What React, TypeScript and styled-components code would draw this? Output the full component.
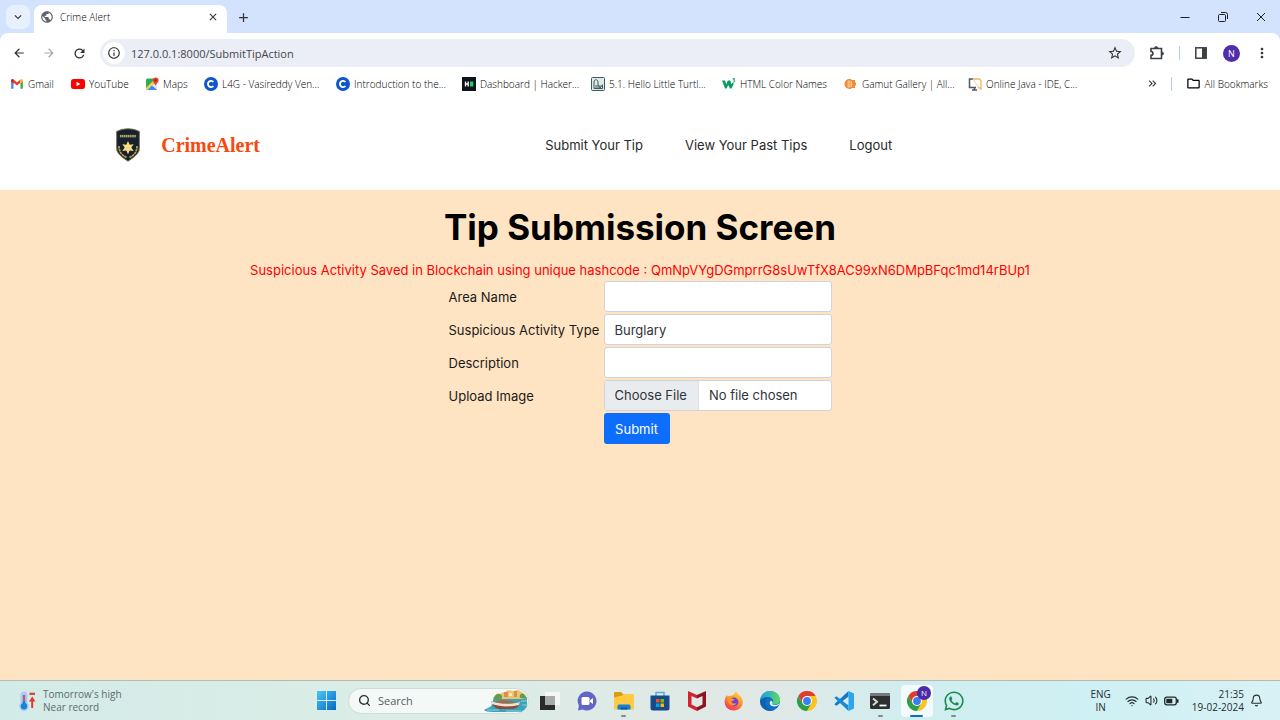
import React from "react";
import styled, { createGlobalStyle } from "styled-components";
import {
  MdArrowBack,
  MdArrowForward,
  MdRefresh,
  MdInfoOutline,
  MdStarBorder,
  MdMoreVert,
  MdOutlineFolder,
  MdKeyboardDoubleArrowRight,
  MdPublic,
  MdClose,
  MdAdd,
  MdKeyboardArrowDown,
} from "react-icons/md";
import { FaWhatsapp } from "react-icons/fa";
import { Bell, Search, Volume2, Wifi } from "lucide-react";

const uiFont = `"Open Sans", "Noto Sans", sans-serif`;

const GlobalStyle = createGlobalStyle`
  * { box-sizing: border-box; }
  body { margin: 0; font-family: Inter, sans-serif; }
  button, input, select { font: inherit; color: inherit; }
  svg { display: block; flex: none; }
`;

const Screen = styled.div`
  display: flex;
  flex-direction: column;
  min-height: 100vh;
`;

/* ---------- browser window ---------- */

const Browser = styled.header`
  background: #d3e2fd;
  font-family: ${uiFont};
  font-weight: 300;
  color: #303236;
`;

const TabStrip = styled.div`
  display: flex;
  align-items: flex-end;
  height: 33px;
  padding-left: 6px;
`;

const IconButton = styled.button<{ $size?: number; $color?: string }>`
  display: flex;
  align-items: center;
  justify-content: center;
  flex: none;
  width: ${(p) => p.$size ?? 24}px;
  height: ${(p) => p.$size ?? 24}px;
  padding: 0;
  border: 0;
  border-radius: 8px;
  background: none;
  color: ${(p) => p.$color ?? "#303236"};
`;

const TabSearch = styled(IconButton)`
  background: #e8f0fe;
  margin: 0 4px 4px 0;
`;

const Tab = styled.div`
  display: flex;
  align-items: center;
  gap: 6px;
  width: 193px;
  height: 28px;
  padding: 0 6px 4px 6px;
  border-radius: 8px 8px 0 0;
  background: #fff;
  font-size: 10px;
  color: #000;
`;

const TabTitle = styled.span`
  flex: 1;
`;

const NewTab = styled(IconButton)`
  margin: 0 0 4px 4px;
`;

const WindowButtons = styled.div`
  display: flex;
  align-self: center;
  margin-left: auto;
`;

const WindowButton = styled(IconButton)`
  width: 38px;
`;

const Toolbar = styled.div`
  display: flex;
  align-items: center;
  height: 40px;
  padding: 0 6px 0 4px;
  border-radius: 8px 8px 0 0;
  background: #fff;
`;

const NavButton = styled(IconButton)`
  width: 30px;
`;

const AddressBar = styled.form`
  display: flex;
  align-items: center;
  flex: 1;
  height: 28px;
  margin: 0 10px 0 6px;
  padding: 0 8px 0 3px;
  border-radius: 14px;
  background: #ebedf7;
`;

const SiteInfo = styled(IconButton)`
  border-radius: 50%;
  background: #fff;
`;

const AddressInput = styled.input`
  flex: 1;
  min-width: 0;
  padding: 0 6px;
  border: 0;
  outline: 0;
  background: none;
  font-size: 11px;
  font-weight: 400;
  color: #46484c;
`;

const Divider = styled.span<{ $space: string }>`
  width: 1px;
  height: 14px;
  margin: ${(p) => p.$space};
  background: #b4caf5;
`;

const Profile = styled.button`
  width: 17px;
  height: 17px;
  margin: 0 10px 0 10px;
  padding: 0;
  border: 0;
  border-radius: 50%;
  background: #512da8;
  color: #fff;
  font-size: 9px;
  font-weight: 400;
`;

const Bookmarks = styled.nav`
  display: flex;
  align-items: center;
  height: 27px;
  padding: 0 12px 6px 10px;
  background: #fff;
  font-size: 10px;
`;

const BookmarkList = styled.div`
  display: grid;
  grid-template-columns: 61px 74px 59px 132px 126px 129px 131px 122px 124px auto;
  flex: 1;
`;

const Bookmark = styled.a`
  display: flex;
  align-items: center;
  gap: 4px;
  color: #000;
  text-decoration: none;
  white-space: nowrap;
`;

/* ---------- site ---------- */

const SiteHeader = styled.div`
  display: flex;
  align-items: center;
  height: 90px;
  padding: 0 9%;
  background: #fff;
`;

const Brand = styled.a`
  display: flex;
  align-items: center;
  gap: 20px;
  flex: 0 0 430px;
  font-family: "Liberation Serif", serif;
  font-size: 20px;
  font-weight: 700;
  color: #f9480e;
  text-decoration: none;
`;

const SiteNav = styled.nav`
  display: flex;
  gap: 42px;
`;

const SiteLink = styled.a`
  font-size: 13px;
  line-height: 20px;
  color: #2a2a2a;
  text-decoration: none;
`;

const Main = styled.main`
  display: flex;
  flex-direction: column;
  align-items: center;
  flex: 1;
  padding-top: 14px;
  background: #ffe4c4;
  font-size: 13px;
  color: #1c1a17;
`;

const Title = styled.h1`
  margin: 0;
  font-size: 35px;
  font-weight: 700;
  line-height: 46px;
  color: #000;
`;

const Notice = styled.p`
  margin: 10px 0 0;
  line-height: 20px;
  color: #f00;
`;

const TipForm = styled.form`
  display: grid;
  grid-template-columns: 153px 228px;
  grid-auto-rows: 31px;
  gap: 2px;
  align-items: center;
  margin-top: 1px;
`;

const Label = styled.label`
  white-space: nowrap;
`;

const Field = styled.input`
  width: 100%;
  height: 31px;
  padding: 0 10px;
  border: 1px solid #ced4da;
  border-radius: 3px;
  background: #fff;
  color: #2f3438;
`;

const FileField = styled(Field)`
  line-height: 29px;
  overflow: hidden;

  &::file-selector-button {
    height: 29px;
    margin: 0 10px 0 -10px;
    padding: 0 11px 0 10px;
    border: 0;
    border-right: 1px solid #dde1e5;
    background: #e9ecef;
    font: inherit;
    color: inherit;
  }
`;

const Select = styled(Field).attrs({ as: "select" })`
  appearance: none;
`;

const SubmitButton = styled.button`
  grid-column: 2;
  justify-self: start;
  width: 66px;
  height: 31px;
  padding: 0;
  border: 0;
  border-radius: 3px;
  background: #0d6efd;
  color: #fff;
`;

/* ---------- taskbar ---------- */

const Taskbar = styled.footer`
  display: grid;
  grid-template-columns: 1fr auto 1fr;
  align-items: center;
  height: 40px;
  padding: 0 17px 0 18px;
  border-top: 1px solid #b5bcb4;
  background: linear-gradient(90deg, #d3ebe8, #dcede6 32%, #e0e8e6 60%, #d0eef0 72%, #cff0f4 85%, #d8f1f5);
  font-family: ${uiFont};
  font-size: 10px;
  line-height: 13px;
  color: #262d2f;
`;

const Weather = styled.div`
  display: flex;
  align-items: center;
  gap: 7px;
  color: #5d6b6c;
`;

const Dock = styled.div`
  display: flex;
  align-items: center;
`;

const StartButton = styled.button`
  display: flex;
  padding: 8px;
  border: 0;
  margin-right: 4px;
  background: none;
`;

const SearchBox = styled.label`
  display: flex;
  align-items: center;
  width: 181px;
  height: 26px;
  padding-left: 9px;
  border: 1px solid #cddbd9;
  border-radius: 13px;
  background: #f4f9f8;
  overflow: hidden;
`;

const SearchInput = styled.input`
  flex: 1;
  min-width: 0;
  padding: 0 7px;
  border: 0;
  outline: 0;
  background: none;
  font-size: 11px;
  &::placeholder { color: #555d5e; opacity: 1; }
`;

const Apps = styled.div`
  display: grid;
  grid-template-columns: repeat(12, 1fr);
  width: 440px;
  margin-left: 3px;
  justify-items: center;
`;

const AppButton = styled.button<{ $active?: boolean; $running?: boolean }>`
  position: relative;
  display: flex;
  align-items: center;
  justify-content: center;
  width: 32px;
  height: 32px;
  padding: 0;
  border: 0;
  border-radius: 4px;
  background: ${(p) => (p.$active ? "#f2fafb" : "none")};

  &::after {
    content: "";
    display: ${(p) => (p.$active || p.$running ? "block" : "none")};
    position: absolute;
    bottom: 0;
    width: ${(p) => (p.$active ? 13 : 5)}px;
    height: 2px;
    border-radius: 1px;
    background: ${(p) => (p.$active ? "#0a6fc4" : "#808a8b")};
  }
`;

const AppBadge = styled.span`
  position: absolute;
  top: 1px;
  right: 2px;
  width: 14px;
  border-radius: 50%;
  background: #4b2aa5;
  font-size: 8px;
  line-height: 14px;
  color: #fff;
`;

const Tray = styled.div`
  display: flex;
  align-items: center;
  justify-content: flex-end;
`;

const Language = styled.div`
  margin-right: 14px;
  text-align: center;
`;

const TrayIcons = styled.div`
  display: flex;
  align-items: center;
  gap: 6px;
  margin-right: 13px;
`;

const Clock = styled.div`
  margin-right: 6px;
  text-align: right;
`;

/* ---------- drawings ---------- */

const Gmail = () => (
  <svg width="14" height="14" viewBox="0 0 24 24">
    <path d="M2 20V7l4 3v10z" fill="#4285f4" />
    <path d="M22 20V7l-4 3v10z" fill="#34a853" />
    <path d="M2 8V6c0-2 2-3 4-1.600L12 9l6-4.600v5.600l-6 4.500-6-4.500z" fill="#ea4335" />
    <path d="M18 4.400C20 3 22 4 22 6v2l-4 3z" fill="#fbbc04" />
    <path d="M6 4.400C4 3 2 4 2 6v2l4 3z" fill="#c5221f" />
  </svg>
);

const YouTube = () => (
  <svg width="14" height="14" viewBox="0 0 14 14">
    <rect x="0" y="2" width="14" height="10" rx="2.500" fill="#f00" />
    <path d="M5.500 4.800v4.400L9.400 7z" fill="#fff" />
  </svg>
);

const Maps = () => (
  <svg width="14" height="14" viewBox="0 0 14 14">
    <rect x="1" y="1.500" width="11" height="11.500" rx="1.500" fill="#34a853" />
    <path d="M2 13L12 3v8.500a1.500 1.500 0 0 1-1.500 1.500z" fill="#dfe5ea" />
    <path d="M2.500 13L7 8.500l5 4.500z" fill="#4285f4" />
    <path d="M1 11L10.500 1.500h1.500V3L2 13a1.500 1.500 0 0 1-1-1z" fill="#fbd34b" />
    <path d="M10.500 9C10 6.500 7.800 6 7.800 3.300a2.900 2.900 0 0 1 5.800 0C13.600 6 11 6.500 10.500 9z" fill="#ea4335" />
    <circle cx="10.700" cy="3.300" r="1.100" fill="#8e1d14" />
  </svg>
);

const Coding = () => (
  <svg width="14" height="14" viewBox="0 0 14 14">
    <circle cx="7" cy="7" r="7" fill="#1155cc" />
    <path d="M9.400 9A3.100 3.100 0 1 1 9.400 5" fill="none" stroke="#fff" strokeWidth="1.900" />
  </svg>
);

const HackerRank = () => (
  <svg width="14" height="14" viewBox="0 0 14 14">
    <rect width="14" height="14" fill="#0e141e" />
    <path d="M3.500 4.500v5M6.200 4.500v5M3.500 7h2.700" stroke="#fff" strokeWidth="1.300" />
    <rect x="8" y="4.500" width="3.300" height="5" fill="#2ec866" />
  </svg>
);

const Turtle = () => (
  <svg width="14" height="14" viewBox="0 0 14 14" fill="none" stroke="#3f5a5e">
    <rect x="0.500" y="0.500" width="13" height="13" rx="1" fill="#dfe9e7" />
    <path d="M3 11.500V5c0-3 4-3 4 0v3M3 11.500h8.500V7.500M5 11V8M7 11V8l2 3V8M11.500 8L9 11" />
  </svg>
);

const W3 = () => (
  <svg width="14" height="14" viewBox="0 0 14 14">
    <path d="M0 3.500h3l1.300 3.700L5.800 3.500h2.400l1.400 3.700.9-1.700 1.300 1.200L9.500 11.500H8L6.200 8l-1.700 3.500H3z" fill="#0b9b63" />
    <path d="M10.500 1.800h2.300l-1.200 1.300c1.800 0 1.700 2.400-.8 2" fill="none" stroke="#0b9b63" strokeWidth="1" />
  </svg>
);

const Gamut = () => (
  <svg width="14" height="14" viewBox="0 0 14 14">
    <path d="M5.500 2a5 5 0 1 0 0 10c1.500 0 2-.5 2.500-1h3V8.500h1V5.500h-1V3H8c-.5-.5-1-1-2.500-1z" fill="#f08a33" />
    <path d="M3 5h5M3 7.200h6M3 9.200h5M5 3v8M7.300 4v6" stroke="#fbd3ab" strokeWidth=".8" />
  </svg>
);

const JavaIde = () => (
  <svg width="14" height="14" viewBox="0 0 14 14" fill="none">
    <path d="M5 2H1.500v8.500H8M4 13h5M6.500 10.500V13" stroke="#50585c" strokeWidth="1.500" />
    <path d="M5 2h6.500L13 4v8l-3-2" stroke="#f4b45c" strokeWidth="1.300" />
    <path d="M5 2l5 8" stroke="#f6d3a0" />
  </svg>
);

const Extension = () => (
  <svg width="16" height="16" viewBox="0 0 16 16" fill="none" stroke="#3c4043" strokeWidth="1.600">
    <path d="M2 3.500h10.500v10H2v-3.200c2.600-.2 2.600-3.600 0-3.800z" />
    <path d="M5.600 3a1.600 1.600 0 0 1 3.200 0zM13 6.900a1.600 1.600 0 0 1 0 3.200z" fill="#3c4043" strokeWidth=".6" />
  </svg>
);

const SidePanel = () => (
  <svg width="12" height="12" viewBox="0 0 12 12">
    <rect x="0.800" y="0.800" width="10.400" height="10.400" fill="none" stroke="#3c4043" strokeWidth="1.500" />
    <rect x="7" y="1" width="4.500" height="10" fill="#3c4043" />
  </svg>
);

const WindowIcon = ({ d }: { d: string }) => (
  <svg width="10" height="10" viewBox="0 0 10 10" fill="none" stroke="#1f2023">
    <path d={d} />
  </svg>
);

const Badge = () => (
  <svg width="26" height="34" viewBox="0 0 25 34">
    <path d="M12.500.8C9 .8 5 1.500 1 3.600c.6 6-.5 13 .5 19.400 2.500 5 7 7.500 11 10.200 4-2.700 8.500-5.200 11-10.200 1-6.400-.1-13.400.5-19.400C20 1.500 16 .8 12.500.8z" fill="#17202e" stroke="#77754f" strokeWidth="1" />
    <path d="M4 6.200h17v4H4z" fill="#2b3034" />
    <path d="M4.500 8.200h16" stroke="#b8a967" strokeWidth="2.200" strokeDasharray="1.400 .5" />
    <path d="M3.500 18c0 6 3 9.500 8 11.500M21.500 18c0 6-3 9.500-8 11.500" fill="none" stroke="#b09a4c" strokeWidth="1.800" strokeDasharray="2.500 .5" />
    <path d="M12.500 13l1.700 3.700 4-.4-2.400 3.300 2.400 3.300-4-.4-1.700 3.700-1.700-3.700-4 .4 2.400-3.300-2.400-3.300 4 .4z" fill="#f5dd83" />
  </svg>
);

const Thermometer = () => (
  <svg width="18" height="20" viewBox="0 0 18 20">
    <path d="M2.500 4a3.500 3.500 0 0 1 7 0v8a4.800 4.800 0 1 1-7 0z" fill="#a9cdef" />
    <path d="M6 4v10" stroke="#c2568a" strokeWidth="2.400" />
    <path d="M6 10v5" stroke="#1683d8" strokeWidth="2.400" />
    <circle cx="6" cy="15.200" r="3.200" fill="#1683d8" />
    <path d="M11.500 2.800h5.500" stroke="#e03a2d" strokeWidth="2.200" />
    <path d="M14.200 17V7" stroke="#e03a2d" strokeWidth="2" />
    <path d="M11 10.500l3.200-5 3.200 5z" fill="#e03a2d" />
  </svg>
);

const Windows = () => (
  <svg width="19" height="19" viewBox="0 0 19 19">
    <defs>
      <linearGradient id="win" x1="0" y1="0" x2="19" y2="19" gradientUnits="userSpaceOnUse">
        <stop stopColor="#4cc6f5" />
        <stop offset="1" stopColor="#0468c8" />
      </linearGradient>
    </defs>
    <path d="M0 0h9v9H0zM10 0h9v9h-9zM0 10h9v9H0zM10 10h9v9h-9z" fill="url(#win)" />
  </svg>
);

const Harbour = () => (
  <svg width="44" height="24" viewBox="0 0 44 24">
    <path d="M10 8h33v10c-1 3-3 5-6 5H8c-4 0-7-1-8-2 3-2 8-3 8-6z" fill="#3ba3bd" />
    <path d="M14 8l3-4 4-1 3-2 5 1 5-1 4 2 3 3 2 4H14z" fill="#e8c66c" />
    <path d="M20 3h4v5h-4zM30 2h3v6h-3z" fill="#e08a55" />
    <path d="M25 4h3v3h-3z" fill="#f6e6b8" />
    <path d="M10 11c-1-4 3-7 6-6s2 5 1 6zM36 9c-1-4 2-6 5-3l2 4z" fill="#6b9a4e" />
    <path d="M7 12c8 4 20 4 29 1-1 5-4 7-9 7H15c-4-1-7-4-8-8z" fill="#8c4a38" />
    <path d="M7 12c8 3 20 4 29 1l-1 3c-8 2-19 2-27-1z" fill="#f0e2cf" />
    <path d="M11 13l6-2 11 1 4 1c-6 2-15 2-21 0z" fill="#a86a45" />
    <path d="M3 21h12M22 22h15M38 16h5M37 12h6" stroke="#8bd2da" />
  </svg>
);

const TaskView = () => (
  <svg width="20" height="20" viewBox="0 0 20 20">
    <rect x="0" y="5" width="15" height="14" fill="#292b2c" />
    <rect x="5" y="1" width="15" height="13" fill="#f5f7f7" />
    <rect x="5" y="5" width="10" height="9" fill="#a7abac" />
  </svg>
);

const Chat = () => (
  <svg width="20" height="20" viewBox="0 0 20 20">
    <path d="M10 .5a9.500 9.500 0 1 1-4.300 18L1 19.500l.9-4.800A9.500 9.500 0 0 1 10 .5z" fill="#6264c7" />
    <rect x="4.500" y="6" width="8" height="8" rx="1.500" fill="#fff" />
    <path d="M13 9.300l3-2.300v6l-3-2.300z" fill="#fff" />
  </svg>
);

const FileExplorer = () => (
  <svg width="20" height="20" viewBox="0 0 20 20">
    <path d="M0 2a1 1 0 0 1 1-1h6l2 2h10v6H0z" fill="#dc9a13" />
    <path d="M0 6.500l8-2L9.500 3H19a1 1 0 0 1 1 1v14.500H0z" fill="#fdca42" />
    <path d="M3.500 18.500V15A1.500 1.500 0 0 1 5 13.500h10a1.500 1.500 0 0 1 1.500 1.500v3.500z" fill="#1380d4" />
    <path d="M6.500 16.500h7v2h-7z" fill="#0b5aa5" />
  </svg>
);

const Store = () => (
  <svg width="20" height="20" viewBox="0 0 20 20">
    <path d="M6 5V1.500h8V5" fill="none" stroke="#53aee0" strokeWidth="1.500" />
    <path d="M.5 4.500h19V17a2.500 2.500 0 0 1-2.500 2.500H3A2.500 2.500 0 0 1 .5 17z" fill="#17498c" />
    <path d="M6 8h3.500v3.500H6z" fill="#f25022" />
    <path d="M10.500 8H14v3.500h-3.500z" fill="#7fba00" />
    <path d="M6 12.500h3.500V16H6z" fill="#00a4ef" />
    <path d="M10.500 12.500H14V16h-3.500z" fill="#ffb900" />
  </svg>
);

const McAfee = () => (
  <svg width="18" height="20" viewBox="0 0 18 20">
    <path d="M0 0l9 4v3.500L3.500 5v8.500L9 16.300V20L0 15.500z" fill="#d3232d" />
    <path d="M18 0L9 4v3.500L14.500 5v8.500L9 16.300V20l9-4.500z" fill="#8f1420" />
  </svg>
);

const Firefox = () => (
  <svg width="20" height="20" viewBox="0 0 20 20">
    <defs>
      <linearGradient id="fox" x1="15" y1="1" x2="5" y2="19" gradientUnits="userSpaceOnUse">
        <stop stopColor="#ffd83d" />
        <stop offset=".5" stopColor="#ff8a2a" />
        <stop offset="1" stopColor="#f2335f" />
      </linearGradient>
    </defs>
    <path d="M12 0c1 3 4 4 5.500 6.500 3.500 6-.5 13-7.500 13S-.5 14 1 8c.4-1.600 1-3 2-4l.7 1.800C5 4.500 6 4.500 7 5c2-1 4-2 5-5z" fill="url(#fox)" />
    <circle cx="10" cy="11" r="4.400" fill="#7b3fd0" />
    <path d="M3 7c2-1 4 0 5 .8l2.500.4c0 1.200-2.500 1.300-3 2.500.5 2 3.500 2.500 5 1-1 4-7.500 3.500-8.500-1z" fill="#ff9829" />
  </svg>
);

const Edge = () => (
  <svg width="20" height="20" viewBox="0 0 20 20">
    <defs>
      <linearGradient id="edgeTop" x1="1" y1="5" x2="20" y2="8" gradientUnits="userSpaceOnUse">
        <stop stopColor="#1e9fe0" />
        <stop offset="1" stopColor="#5fdb61" />
      </linearGradient>
    </defs>
    <circle cx="10" cy="10" r="10" fill="#1270c4" />
    <path d="M0 9.500C.5 3.500 5 0 10 0c6 0 10 4 10 8.500 0 3.500-2.500 5-5 5-2 0-3.300-.8-2.500-1.800C14.500 9 11.500 6 8 6 4 6 1 8 0 9.500z" fill="url(#edgeTop)" />
    <path d="M12.500 11.700c-1 1.500.5 2.200 2.500 2.200 1.800 0 3.200-.7 4-1.500l.7.400c-1.500 2.200-4.700 3.400-7.700 2.200-2.500-1-3-4-1-5.600 1 .5 1.800 1.400 1.500 2.300z" fill="#e6f3f3" />
    <path d="M8 6C5 7 4 12 6.500 15.500c2 3 6 4 8.500 3.200A10 10 0 0 1 0 9.500C1 8 4 6 8 6z" fill="#0c59a4" opacity=".65" />
  </svg>
);

const Chrome = () => (
  <svg width="20" height="20" viewBox="1 1 22 22">
    <path d="M2.470 6.500A11 11 0 0 1 21.530 6.500H12V12L7.240 14.750z" fill="#e33b2e" />
    <path d="M21.530 6.500A11 11 0 0 1 12 23l4.760-8.250L12 12V6.500z" fill="#fcc31e" />
    <path d="M12 23A11 11 0 0 1 2.470 6.500l4.770 8.250L12 12l4.760 2.750z" fill="#2c9d48" />
    <circle cx="12" cy="12" r="5.500" fill="#fff" />
    <circle cx="12" cy="12" r="4.300" fill="#3b7ded" />
  </svg>
);

const VsCode = () => (
  <svg width="20" height="20" viewBox="0 0 20 20">
    <path d="M14.500 5.500L2.500 14.800.3 13.200 14.500 0z" fill="#1279c4" />
    <path d="M14.500 14.500L2.500 5.200.3 6.800 14.500 20z" fill="#1a8ad6" />
    <path d="M14.500 0L20 2.500v15L14.500 20z" fill="#2aa5ef" />
  </svg>
);

const Terminal = () => (
  <svg width="20" height="16" viewBox="0 0 20 16">
    <rect width="20" height="16" rx="1.500" fill="#2d2f31" />
    <path d="M0 3V1.500A1.500 1.500 0 0 1 1.500 0h17A1.500 1.500 0 0 1 20 1.500V3z" fill="#75797b" />
    <path d="M3 5.500l4 3.300-4 3.500" fill="none" stroke="#d7dadb" strokeWidth="2" />
    <path d="M9.500 12.500h7" stroke="#fff" strokeWidth="1.800" />
  </svg>
);

const Battery = () => (
  <svg width="15" height="10" viewBox="0 0 15 10">
    <rect x="0.700" y="1.200" width="11.600" height="7.600" rx="2" fill="none" stroke="#20282a" strokeWidth="1.300" />
    <rect x="2.300" y="2.800" width="6" height="4.400" fill="#20282a" />
    <path d="M13 3.300h1.500v3.400H13z" fill="#20282a" />
  </svg>
);

/* ---------- page data ---------- */

const bookmarks: [string, React.ReactNode][] = [
  ["Gmail", <Gmail />],
  ["YouTube", <YouTube />],
  ["Maps", <Maps />],
  ["L4G - Vasireddy Ven...", <Coding />],
  ["Introduction to the...", <Coding />],
  ["Dashboard | Hacker...", <HackerRank />],
  ["5.1. Hello Little Turtl...", <Turtle />],
  ["HTML Color Names", <W3 />],
  ["Gamut Gallery | All...", <Gamut />],
  ["Online Java - IDE, C...", <JavaIde />],
];

const apps: { name: string; icon: React.ReactNode; running?: boolean; badge?: string }[] = [
  { name: "Task view", icon: <TaskView /> },
  { name: "Chat", icon: <Chat /> },
  { name: "File Explorer", icon: <FileExplorer />, running: true },
  { name: "Microsoft Store", icon: <Store /> },
  { name: "McAfee", icon: <McAfee /> },
  { name: "Firefox", icon: <Firefox /> },
  { name: "Edge", icon: <Edge /> },
  { name: "Chrome", icon: <Chrome /> },
  { name: "Visual Studio Code", icon: <VsCode /> },
  { name: "Terminal", icon: <Terminal />, running: true },
  { name: "Chrome, profile N", icon: <Chrome />, badge: "N" },
  { name: "WhatsApp", icon: <FaWhatsapp size={22} color="#1d8a50" />, running: true },
];

export default function App() {
  return (
    <Screen>
      <GlobalStyle />
      <Browser>
        <TabStrip>
          <TabSearch aria-label="Search tabs"><MdKeyboardArrowDown size={14} /></TabSearch>
          <Tab>
            <MdPublic size={14} color="#5f6368" />
            <TabTitle>Crime Alert</TabTitle>
            <IconButton $size={16} aria-label="Close tab"><MdClose size={12} /></IconButton>
          </Tab>
          <NewTab aria-label="New tab"><MdAdd size={15} /></NewTab>
          <WindowButtons>
            <WindowButton aria-label="Minimize"><WindowIcon d="M0.500 5.500h9" /></WindowButton>
            <WindowButton aria-label="Restore">
              <WindowIcon d="M1.500 2.500h5a1 1 0 0 1 1 1v5a1 1 0 0 1-1 1h-5a1 1 0 0 1-1-1v-5a1 1 0 0 1 1-1zM3 .5h4.500a2 2 0 0 1 2 2V7" />
            </WindowButton>
            <WindowButton aria-label="Close"><WindowIcon d="M1 1l8 8M9 1l-8 8" /></WindowButton>
          </WindowButtons>
        </TabStrip>
        <Toolbar>
          <NavButton aria-label="Back"><MdArrowBack size={14} /></NavButton>
          <NavButton aria-label="Forward" $color="#a5a7aa"><MdArrowForward size={14} /></NavButton>
          <NavButton aria-label="Reload"><MdRefresh size={15} /></NavButton>
          <AddressBar>
            <SiteInfo type="button" $size={22} aria-label="Site information"><MdInfoOutline size={14} /></SiteInfo>
            <AddressInput aria-label="Address" defaultValue="127.0.0.1:8000/SubmitTipAction" />
            <IconButton type="button" aria-label="Bookmark this page"><MdStarBorder size={16} /></IconButton>
          </AddressBar>
          <IconButton aria-label="Extensions"><Extension /></IconButton>
          <Divider $space="0 9px 0 10px" />
          <IconButton aria-label="Side panel"><SidePanel /></IconButton>
          <Profile aria-label="Profile">N</Profile>
          <IconButton aria-label="Menu"><MdMoreVert size={16} /></IconButton>
        </Toolbar>
        <Bookmarks>
          <BookmarkList>
            {bookmarks.map(([name, icon]) => (
              <Bookmark href="#" key={name}>{icon}{name}</Bookmark>
            ))}
          </BookmarkList>
          <MdKeyboardDoubleArrowRight size={13} />
          <Divider $space="0 14px 0 12px" />
          <Bookmark href="#"><MdOutlineFolder size={15} />All Bookmarks</Bookmark>
        </Bookmarks>
      </Browser>

      <SiteHeader>
        <Brand href="#"><Badge />CrimeAlert</Brand>
        <SiteNav>
          <SiteLink href="#">Submit Your Tip</SiteLink>
          <SiteLink href="#">View Your Past Tips</SiteLink>
          <SiteLink href="#">Logout</SiteLink>
        </SiteNav>
      </SiteHeader>

      <Main>
        <Title>Tip Submission Screen</Title>
        <Notice>
          Suspicious Activity Saved in Blockchain using unique hashcode : QmNpVYgDGmprrG8sUwTfX8AC99xN6DMpBFqc1md14rBUp1
        </Notice>
        <TipForm>
          <Label htmlFor="area">Area Name</Label>
          <Field id="area" type="text" />
          <Label htmlFor="type">Suspicious Activity Type</Label>
          <Select id="type" defaultValue="Burglary">
            <option>Burglary</option>
          </Select>
          <Label htmlFor="description">Description</Label>
          <Field id="description" type="text" />
          <Label htmlFor="image">Upload Image</Label>
          <FileField id="image" type="file" />
          <SubmitButton type="submit">Submit</SubmitButton>
        </TipForm>
      </Main>

      <Taskbar>
        <Weather>
          <Thermometer />
          <div>Tomorrow's high<br />Near record</div>
        </Weather>
        <Dock>
          <StartButton aria-label="Start"><Windows /></StartButton>
          <SearchBox>
            <Search size={13} strokeWidth={2.500} />
            <SearchInput type="text" placeholder="Search" aria-label="Search" />
            <Harbour />
          </SearchBox>
          <Apps>
            {apps.map((app) => (
              <AppButton key={app.name} aria-label={app.name} $active={!!app.badge} $running={app.running}>
                {app.icon}
                {app.badge && <AppBadge>{app.badge}</AppBadge>}
              </AppButton>
            ))}
          </Apps>
        </Dock>
        <Tray>
          <Language>ENG<br />IN</Language>
          <TrayIcons>
            <Wifi size={14} />
            <Volume2 size={13} strokeWidth={2} />
            <Battery />
          </TrayIcons>
          <Clock>21:35<br />19-02-2024</Clock>
          <Bell size={13} />
        </Tray>
      </Taskbar>
    </Screen>
  );
}
